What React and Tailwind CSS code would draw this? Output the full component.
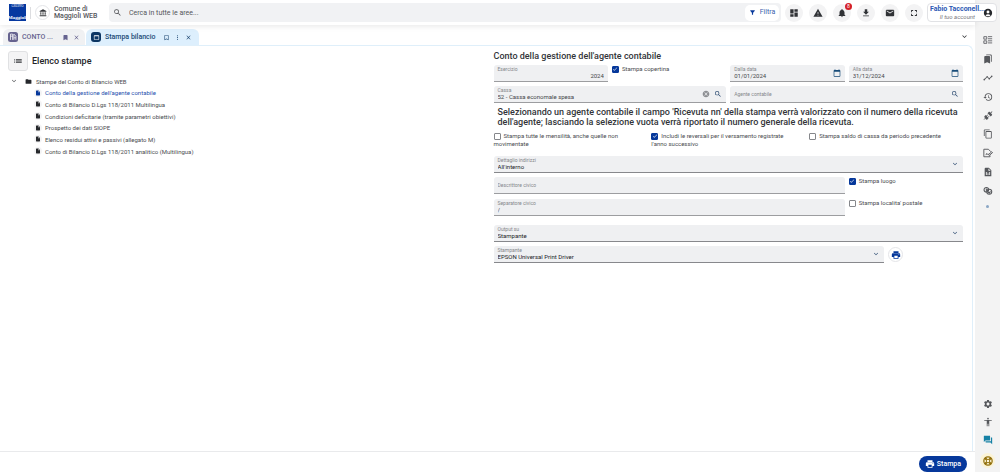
// src/App.jsx

import React from 'react';
import {
  MdSearch, MdFilterAlt, MdDashboard, MdWarning, MdNotifications, MdDownload, MdMail,
  MdFullscreen, MdAccountCircle, MdBookmark, MdBookmarkBorder, MdClose, MdMoreVert, MdExpandMore,
  MdList, MdFolder, MdInsertDriveFile, MdCancel, MdCalendarToday, MdPrint,
  MdBookmarks, MdTimeline, MdHistory, MdContentCopy, MdSettings, MdAccessibility, MdForum,
  MdAccountBalance, MdOutlineWebAsset, MdCheck,
} from 'react-icons/md';

const reports = [
  "Conto della gestione dell'agente contabile",
  'Conto di Bilancio D.Lgs 118/2011 Multilingua',
  'Condizioni deficitarie (tramite parametri obiettivi)',
  'Prospetto dei dati SIOPE',
  'Elenco residui attivi e passivi (allegato M)',
  'Conto di Bilancio D.Lgs 118/2011 analitico (Multilingua)',
];

function BallotIcon() {
  return (
    <svg viewBox="0 0 24 24" className="size-[10px]" fill="none" stroke="currentColor" strokeWidth="2" aria-hidden="true">
      <path d="M2 4h7v6H2zM2 14h7v6H2zM12 4h10M12 9h10M12 14h10M12 19h10" />
    </svg>
  );
}

function PlugIcon() {
  return (
    <svg viewBox="0 0 24 24" className="size-[10px]" fill="currentColor" aria-hidden="true">
      <path d="M21.4 7.5c.8.8.8 2.1 0 2.8l-2.8 2.9-7.8-7.8 2.9-2.8c.7-.8 2-.8 2.8 0l1.4 1.4L21.3.6l1.4 1.4-3.4 3.4 2.1 2.1M15.6 13.3l-1.4-1.4-2.8 2.8-2.1-2.1 2.8-2.8-1.4-1.4-2.8 2.8-1.5-1.4-2.8 2.8c-.8.8-.8 2.1 0 2.8l1.4 1.4-3.4 3.4L2 21.6l3.400-3.400 2.100 2.100c.8.8 2.100.8 2.800 0l2.900-2.900-1.400-1.400 3.800-2.700" />
    </svg>
  );
}

function NoteEditIcon() {
  return (
    <svg viewBox="0 0 24 24" className="size-[10px]" fill="none" stroke="currentColor" strokeWidth="2.200" aria-hidden="true">
      <path d="M17 18v3H2V3h11l6 6" />
      <path d="M7 17l2-4 3 3 3-3M13 16l8-7 2 2-8 7z" />
    </svg>
  );
}

function FileChartIcon() {
  return (
    <svg viewBox="0 0 24 24" className="size-[10px]" fill="currentColor" fillRule="evenodd" aria-hidden="true">
      <path d="M6 2h8l6 6v14H4V4c0-1 1-2 2-2zM13 3.500V9h5.500zM7 12v7h2v-7zM11 14v2h2v-2zM11 17v2h2v-2zM15 12v7h2v-7z" />
    </svg>
  );
}

function CoinsIcon() {
  return (
    <svg viewBox="0 0 24 24" className="size-[10px]" fill="none" stroke="currentColor" strokeWidth="2.500" aria-hidden="true">
      <circle cx="8" cy="9" r="5.500" />
      <circle cx="15" cy="14" r="6" />
      <path d="M8 6v4h4M12 14l3 3 3-4" />
    </svg>
  );
}

function LifebuoyIcon() {
  return (
    <svg viewBox="0 0 24 24" className="size-[10px]" fill="none" stroke="currentColor" aria-hidden="true">
      <circle cx="12" cy="12" r="10" strokeWidth="3" />
      <circle cx="12" cy="12" r="4" strokeWidth="2" />
      <path d="M5 5l4 4M15 15l4 4M19 5l-4 4M9 15l-4 4" strokeWidth="5" />
    </svg>
  );
}

function ModuleIcon() {
  return (
    <svg viewBox="0 0 24 24" className="size-[10px] shrink-0" aria-hidden="true">
      <rect width="24" height="24" rx="6" fill="#66638f" />
      <path d="M6 19V5h5v14M6 10h5M14 19V5l5 5v9M14 14h5" fill="none" stroke="#fff" strokeWidth="1.800" />
    </svg>
  );
}

function RoundButton({ label, children }) {
  return (
    <button aria-label={label} className="flex size-[18px] shrink-0 items-center justify-center rounded-full bg-[#f3f3f4] text-[#303236]">
      {children}
    </button>
  );
}

// Campo con etichetta piccola sopra il valore
function Field({ id, label, value, right, children }) {
  return (
    <div className="flex h-[17px] min-w-0 items-center gap-1 rounded-t-[3px] border-b border-[#9c9da0] bg-[#eff0f2] px-1">
      <div className="flex min-w-0 flex-1 flex-col">
        {value && <label htmlFor={id} className="text-[5px] leading-[6px] text-[#85878b]">{label}</label>}
        <input
          id={id}
          defaultValue={value}
          placeholder={value ? undefined : label}
          aria-label={value ? undefined : label}
          className={`w-full text-[6px] leading-[8px] text-[#45474b] outline-none placeholder:text-[5px] placeholder:text-[#85878b] ${right ? 'text-right' : ''}`}
        />
      </div>
      {children}
    </div>
  );
}

function SelectField({ id, label, value }) {
  return (
    <div className="flex h-[17px] w-full min-w-0 items-center rounded-t-[3px] border-b border-[#87888c] bg-[#eff0f2] px-1">
      <div className="flex min-w-0 flex-1 flex-col">
        <label htmlFor={id} className="text-[5px] leading-[6px] text-[#85878b]">{label}</label>
        <select id={id} className="w-full appearance-none text-[6px] leading-[8px] text-[#222428] outline-none">
          <option>{value}</option>
        </select>
      </div>
      <MdExpandMore className="size-2 text-[#26466d]" />
    </div>
  );
}

function Check({ label, checked }) {
  return (
    <label className="pr-3 text-[6px] leading-[8px] text-[#4a4c50]">
      <span className="mr-[3px] inline-grid size-[7px] place-items-center align-middle">
        <input
          type="checkbox"
          defaultChecked={checked}
          className="peer col-start-1 row-start-1 size-[7px] appearance-none rounded-[1px] border border-[#85878b] bg-white checked:border-[#06389b] checked:bg-[#06389b]"
        />
        <MdCheck className="pointer-events-none col-start-1 row-start-1 hidden size-[6px] text-white peer-checked:block" />
      </span>
      {label}
    </label>
  );
}

function Header() {
  return (
    <header className="z-10 flex h-[25px] shrink-0 items-center bg-white pl-[9px] shadow-[0_1px_6px_rgba(0,0,0,0.1)]">
      <div className="flex size-[17px] shrink-0 flex-col items-center justify-between overflow-hidden bg-[#0638a0] font-['Liberation_Serif',serif] text-white">
        <span className="text-[3px] leading-[5px]">GRUPPO</span>
        <span className="text-[5px] leading-[6px] font-bold">Maggioli</span>
      </div>
      <div className="mx-1 h-3 w-px bg-[#dcdde0]" />
      <button aria-label="Ente" className="flex size-[15px] shrink-0 items-center justify-center rounded-full border border-[#e4e5e8] text-[#333539]">
        <MdAccountBalance className="size-2" />
      </button>
      <div className="ml-1 w-[55px] shrink-0 text-[7px] leading-[7px] font-medium text-[#55575b]">
        Comune di<br />Maggioli WEB
      </div>
      <div className="flex h-[19px] min-w-0 flex-1 items-center rounded-[4px] bg-[#f1f2f4] pr-[2px] pl-1">
        <MdSearch className="size-[9px] shrink-0 text-[#4b4d51]" />
        <input aria-label="Cerca" placeholder="Cerca in tutte le aree..." className="ml-[7px] min-w-0 flex-1 text-[7px] leading-[10px] outline-none placeholder:text-[#55575b]" />
        <button className="flex h-4 w-[34px] items-center justify-center gap-1 rounded-[5px] bg-white text-[7px] text-[#3a5fad]">
          <MdFilterAlt className="size-[7px] text-[#06389b]" />
          Filtra
        </button>
      </div>
      <div className="ml-1 flex shrink-0 items-center gap-[6px] pr-1">
        <RoundButton label="Cruscotto"><MdDashboard className="size-[10px]" /></RoundButton>
        <RoundButton label="Avvisi"><MdWarning className="size-[10px]" /></RoundButton>
        <div className="relative">
          <RoundButton label="Notifiche"><MdNotifications className="size-[10px]" /></RoundButton>
          <span className="absolute -top-px -right-px flex size-[7px] items-center justify-center rounded-full bg-[#d41f26] text-[5px] leading-none text-white">8</span>
        </div>
        <RoundButton label="Scarica"><MdDownload className="size-[10px]" /></RoundButton>
        <RoundButton label="Posta"><MdMail className="size-[10px]" /></RoundButton>
        <RoundButton label="Schermo intero"><MdFullscreen className="size-[10px]" /></RoundButton>
      </div>
      <button className="-mr-[22px] flex h-[19px] w-[70px] shrink-0 items-center rounded-[4px] border border-[#e1e2e5] bg-white pl-[2px]">
        <span className="flex w-[53px] flex-col">
          <span className="text-left text-[7px] leading-[7px] font-bold whitespace-nowrap text-[#2b58b4]">Fabio Tacconell...</span>
          <span className="pr-2 text-right text-[6px] leading-[7px] text-[#77797d] italic">Il tuo account</span>
        </span>
        <MdAccountCircle className="size-[10px] shrink-0 text-[#26282c]" />
      </button>
    </header>
  );
}

function Tabs() {
  return (
    <nav className="flex h-5 shrink-0 items-end pr-[6px] pl-[3px]">
      <div className="flex h-4 w-[82px] items-center rounded-t-[6px] bg-[#f0f1f3] px-[5px] text-[#66638f]">
        <ModuleIcon />
        <button className="ml-1 flex-1 text-left text-[7px] font-medium">CONTO ...</button>
        <button aria-label="Segnalibro" className="mr-1"><MdBookmark className="size-[7px]" /></button>
        <button aria-label="Chiudi CONTO"><MdClose className="size-[7px]" /></button>
      </div>
      <div className="ml-px flex h-4 w-[113px] items-center rounded-t-[6px] bg-[#ddeffd] px-[5px] text-[#214a75]">
        <span className="flex size-[10px] items-center justify-center rounded-[3px] bg-[#0b3563] text-white">
          <MdOutlineWebAsset className="size-[7px]" />
        </span>
        <button className="ml-1 flex-1 text-left text-[7px] font-medium">Stampa bilancio</button>
        <button aria-label="Aggiungi segnalibro" className="mr-1"><MdBookmarkBorder className="size-[7px]" /></button>
        <button aria-label="Altro" className="mr-1"><MdMoreVert className="size-[7px]" /></button>
        <button aria-label="Chiudi Stampa bilancio" className="mr-[2px]"><MdClose className="size-[7px]" /></button>
      </div>
      <button aria-label="Mostra schede" className="mb-1 ml-auto"><MdExpandMore className="size-[9px] text-[#303236]" /></button>
    </nav>
  );
}

function ReportTree() {
  return (
    <section>
      <div className="flex items-center gap-1">
        <button aria-label="Elenco" className="flex size-5 items-center justify-center rounded-[3px] border border-[#e0e1e3] bg-[#f4f4f5]">
          <MdList className="size-[10px] text-[#333539]" />
        </button>
        <h2 className="text-[9px] leading-[12px] font-medium text-[#222428]">Elenco stampe</h2>
      </div>
      <div className="mt-1 flex h-3 items-center pl-[2px] text-[6px] text-[#4a4c50]">
        <MdExpandMore className="size-2" />
        <MdFolder className="ml-[7px] size-[7px] text-[#26282c]" />
        <span className="ml-1">Stampe del Conto di Bilancio WEB</span>
      </div>
      <ul className="grid h-[70px] auto-rows-fr pl-[26px]">
        {reports.map((name, i) => (
          <li key={name} className="flex items-center gap-[3px]">
            <span className="flex size-2 items-center justify-center rounded-full bg-[#f4f4f5]">
              <MdInsertDriveFile className={i === 0 ? 'size-[6px] text-[#06389b]' : 'size-[6px] text-[#26282c]'} />
            </span>
            <a href="#" className={i === 0 ? 'text-[6px] text-[#1f4fae]' : 'text-[6px] text-[#4a4c50]'}>{name}</a>
          </li>
        ))}
      </ul>
    </section>
  );
}

function PrintForm() {
  return (
    <form className="flex flex-col">
      <h2 className="mb-1 text-[9px] leading-[10px] font-medium text-[#333539]">Conto della gestione dell'agente contabile</h2>
      <div className="grid grid-cols-4 gap-1">
        <Field id="esercizio" label="Esercizio" value="2024" right />
        <Check label="Stampa copertina" checked />
        <Field id="dal" label="Dalla data" value="01/01/2024"><MdCalendarToday className="size-2 text-[#174b78]" /></Field>
        <Field id="al" label="Alla data" value="31/12/2024"><MdCalendarToday className="size-2 text-[#174b78]" /></Field>
        <div className="col-span-2">
          <Field id="cassa" label="Cassa" value="52 - Cassa economale spesa">
            <MdCancel className="size-2 text-[#8d8f93]" />
            <MdSearch className="size-2 text-[#26466d]" />
          </Field>
        </div>
        <div className="col-span-2">
          <Field id="agente" label="Agente contabile"><MdSearch className="size-2 text-[#26466d]" /></Field>
        </div>
      </div>
      <p className="mt-1 mb-[5px] pl-1 text-[9px] leading-[10px] font-medium text-[#333539]">
        Selezionando un agente contabile il campo 'Ricevuta nn' della stampa verrà valorizzato con il numero della ricevuta
        dell'agente; lasciando la selezione vuota verrà riportato il numero generale della ricevuta.
      </p>
      <div className="mb-2 grid grid-cols-3 gap-1">
        <Check label="Stampa tutte le mensilità, anche quelle non movimentate" />
        <Check label="Includi le reversali per il versamento registrate l'anno successivo" checked />
        <Check label="Stampa saldo di cassa da periodo precedente" />
      </div>
      <SelectField id="dettaglio" label="Dettaglio indirizzi" value="All'interno" />
      <div className="mt-1 mb-[9px] grid grid-cols-4 gap-x-1 gap-y-[5px]">
        <div className="col-span-3"><Field id="descrittore" label="Descrittore civico" /></div>
        <Check label="Stampa luogo" checked />
        <div className="col-span-3"><Field id="separatore" label="Separatore civico" value="/" /></div>
        <Check label="Stampa localita' postale" />
      </div>
      <SelectField id="output" label="Output su" value="Stampante" />
      <div className="mt-1 flex items-center">
        <SelectField id="stampante" label="Stampante" value="EPSON Universal Print Driver" />
        <button type="button" aria-label="Configura stampante" className="mr-[60px] ml-1 flex size-[15px] shrink-0 items-center justify-center rounded-full border border-[#e4e5e8] text-[#06389b]">
          <MdPrint className="size-[10px]" />
        </button>
      </div>
    </form>
  );
}

function SideBar() {
  const tools = [
    ['Schede', <BallotIcon />],
    ['Segnalibri', <MdBookmarks className="size-[10px]" />],
    ['Andamento', <MdTimeline className="size-[10px]" />],
    ['Cronologia', <MdHistory className="size-[10px]" />],
    ['Collegamenti', <PlugIcon />],
    ['Copia', <MdContentCopy className="size-[10px]" />],
    ['Note', <NoteEditIcon />],
    ['Report', <FileChartIcon />],
    ['Pagamenti', <CoinsIcon />],
  ];

  return (
    <aside className="flex w-[25px] shrink-0 flex-col items-center bg-[#f3f3f3] pt-[35px] pb-1 text-[#55575b]">
      <div className="flex h-[173px] flex-col items-center justify-between">
        {tools.map(([label, icon]) => <button key={label} aria-label={label}>{icon}</button>)}
        <button aria-label="Altri strumenti" className="size-[3px] rounded-full bg-[#8aa6c4]" />
      </div>
      <div className="mt-auto flex flex-col items-center gap-2">
        <button aria-label="Impostazioni"><MdSettings className="size-[10px]" /></button>
        <button aria-label="Accessibilità"><MdAccessibility className="size-[10px]" /></button>
        <button aria-label="Chat" className="text-[#1681a5]"><MdForum className="size-[10px]" /></button>
        <button aria-label="Assistenza" className="flex size-[15px] items-center justify-center rounded-full bg-[#fbf3d6] text-[#92700c]"><LifebuoyIcon /></button>
      </div>
    </aside>
  );
}

function App() {
  return (
    <div className="flex h-screen bg-white font-['Roboto',sans-serif]">
      <div className="flex min-w-0 flex-1 flex-col">
        <Header />
        <Tabs />
        <main className="mr-[2px] grid flex-1 grid-cols-2 content-start gap-4 rounded-tr-[6px] border-t border-r border-[#dfeffa] pt-[5px] pr-[9px] pl-2">
          <ReportTree />
          <PrintForm />
        </main>
        <footer className="flex h-[21px] shrink-0 items-end justify-end border-t border-[#e9eaec] pr-2">
          <button className="flex h-4 items-center gap-[2px] rounded-full bg-[#06389b] px-[6px] text-[7px] font-medium text-white">
            <MdPrint className="size-[10px]" />
            Stampa
          </button>
        </footer>
      </div>
      <SideBar />
    </div>
  );
}

export default App;
